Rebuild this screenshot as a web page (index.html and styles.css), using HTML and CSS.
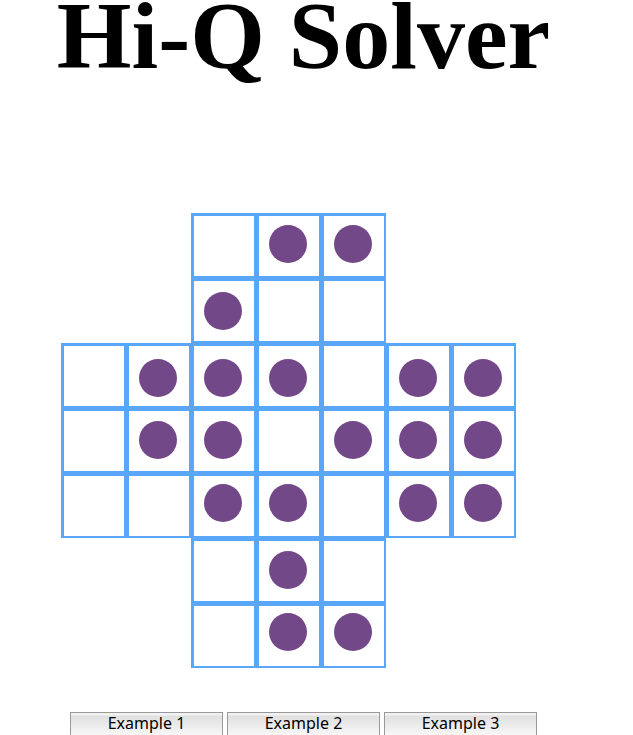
FILE: index.html
```html
<!DOCTYPE html>
<html lang="en">
<head>
<meta charset="utf-8">
<title>Hi-Q Solver</title>
<link rel="stylesheet" href="styles.css">
</head>
<body>
<main class="page">
  <h1 class="title">Hi-Q Solver</h1>
  <div class="board">
    <div class="layer cells">
      <div class="cell c3"></div><div class="cell"></div><div class="cell"></div>
      <div class="cell c3"></div><div class="cell"></div><div class="cell"></div>
      <div class="cell c1"></div><div class="cell"></div><div class="cell"></div><div class="cell"></div><div class="cell"></div><div class="cell"></div><div class="cell"></div>
      <div class="cell c1"></div><div class="cell"></div><div class="cell"></div><div class="cell"></div><div class="cell"></div><div class="cell"></div><div class="cell"></div>
      <div class="cell c1"></div><div class="cell"></div><div class="cell"></div><div class="cell"></div><div class="cell"></div><div class="cell"></div><div class="cell"></div>
      <div class="cell c3"></div><div class="cell"></div><div class="cell"></div>
      <div class="cell c3"></div><div class="cell"></div><div class="cell"></div>
    </div>
    <div class="layer pegs">
      <span class="peg r1 c4"></span><span class="peg r1 c5"></span>
      <span class="peg r2 c3"></span>
      <span class="peg r3 c2"></span><span class="peg r3 c3"></span><span class="peg r3 c4"></span><span class="peg r3 c6"></span><span class="peg r3 c7"></span>
      <span class="peg r4 c2"></span><span class="peg r4 c3"></span><span class="peg r4 c5"></span><span class="peg r4 c6"></span><span class="peg r4 c7"></span>
      <span class="peg r5 c3"></span><span class="peg r5 c4"></span><span class="peg r5 c6"></span><span class="peg r5 c7"></span>
      <span class="peg r6 c4"></span>
      <span class="peg r7 c4"></span><span class="peg r7 c5"></span>
    </div>
  </div>
  <div class="examples">
    <button type="button" class="example">Example 1</button>
    <button type="button" class="example">Example 2</button>
    <button type="button" class="example">Example 3</button>
  </div>
</main>
</body>
</html>
```
FILE: styles.css
```css
html {
  overflow: hidden;
}

body {
  margin: 0;
  background: #fff;
  color: #000;
}

.page {
  padding-right: 26px;
}

.title {
  margin: 0 0 141px;
  font: bold 96px/72px "Liberation Serif", "Times New Roman", serif;
  text-align: center;
  white-space: nowrap;
}

.board {
  display: grid;
  justify-content: start;
  margin: 0 0 44px 61px;
}

.layer {
  grid-area: 1 / 1;
  display: grid;
  grid-template-columns: repeat(7, 65px);
}

.cells {
  grid-template-rows: repeat(7, 65px);
}

.cell {
  border: solid #5aa7f9;
  border-width: 3px 2px 2px 3px;
}

.pegs {
  grid-template-rows: 67px 67px 62px 63px 67px 62px 38px;
  padding-top: 12px;
}

.peg {
  width: 38px;
  height: 38px;
  margin-left: 13px;
  border-radius: 50%;
  background: #734889;
}

.c1 { grid-column: 1; }
.c2 { grid-column: 2; }
.c3 { grid-column: 3; }
.c4 { grid-column: 4; }
.c5 { grid-column: 5; }
.c6 { grid-column: 6; }
.c7 { grid-column: 7; }

.r1 { grid-row: 1; }
.r2 { grid-row: 2; }
.r3 { grid-row: 3; }
.r4 { grid-row: 4; }
.r5 { grid-row: 5; }
.r6 { grid-row: 6; }
.r7 { grid-row: 7; }

.examples {
  display: flex;
  justify-content: center;
  gap: 4px;
}

.example {
  width: 153px;
  height: 24px;
  padding: 0 0 2px;
  border: 1px solid #999;
  border-radius: 0;
  background: linear-gradient(#f2f2f2 0, #f2f2f2 2px, #e0e0e0 3px, #f7f7f7 100%);
  color: #000;
  font: 16px/20px "Noto Sans", "Lucida Grande", sans-serif;
}
```
